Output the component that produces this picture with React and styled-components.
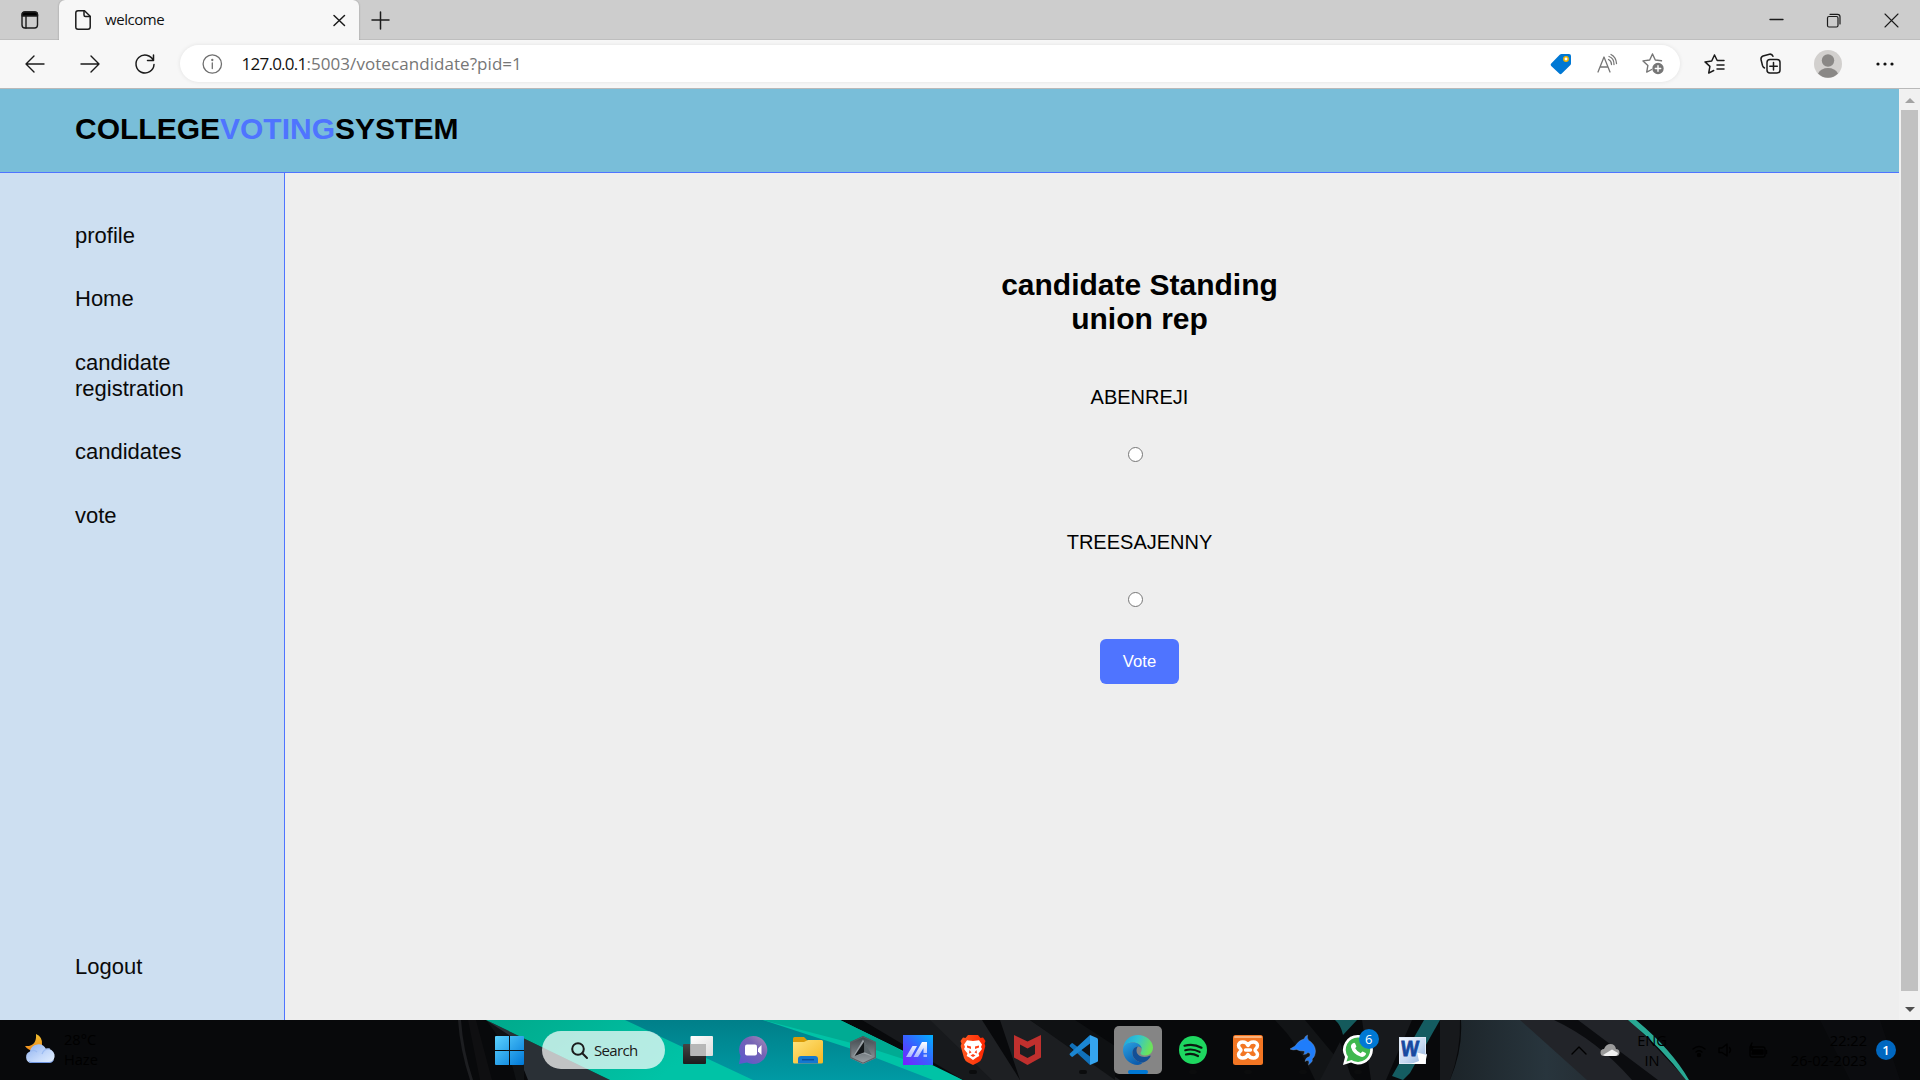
import React from "react";
import styled, { createGlobalStyle } from "styled-components";

const GlobalStyle = createGlobalStyle`
  * { box-sizing: border-box; }
  html, body { margin: 0; padding: 0; overflow: hidden; background: #eee; }
  svg { display: block; flex: none; overflow: visible; }
`;

const uiFont = `"Open Sans", "Noto Sans", sans-serif`;
const pageFont = `"Liberation Sans", Arial, sans-serif`;

const Screen = styled.div`
  width: 1920px;
  height: 1080px;
  display: flex;
  flex-direction: column;
  overflow: hidden;
  font-family: ${uiFont};
`;

/* ---------- browser chrome ---------- */

const TabStrip = styled.div`
  height: 40px;
  flex: none;
  display: flex;
  background: #cdcdcd;
  box-shadow: inset 0 -1px 0 #bebebe;
`;

const Slot = styled.div`
  width: ${(p) => p.$w}px;
  height: 100%;
  flex: none;
  display: flex;
  align-items: center;
  justify-content: center;
`;

const Tab = styled.div`
  width: 300px;
  height: 40px;
  display: flex;
  align-items: center;
  padding: 0 14px 0 16px;
  background: #f7f7f7;
  border-radius: 6px 6px 0 0;
  box-shadow: 0 0 2px rgba(0, 0, 0, 0.3);
`;

const TabTitle = styled.span`
  flex: 1;
  margin-left: 14px;
  padding-bottom: 2px;
  font-size: 15px;
  letter-spacing: -0.45px;
  line-height: 36px;
  color: #111;
`;

const Spacer = styled.div`
  flex: 1;
`;

const Toolbar = styled.div`
  height: 49px;
  flex: none;
  display: flex;
  align-items: center;
  padding: 0 8px 1px 7px;
  background: #f7f7f7;
  border-bottom: 1px solid #b9b9b9;
  position: relative;
`;

const AddressBar = styled.div`
  width: 1500px;
  height: 37px;
  margin: 0 7px 0 8px;
  display: flex;
  align-items: center;
  padding: 0 16px 0 22px;
  border-radius: 19px;
  background: #fff;
  box-shadow: 0 0 4px rgba(0, 0, 0, 0.09);
`;

const Url = styled.div`
  flex: 1;
  margin-left: 19.5px;
  font-size: 17px;
  letter-spacing: -0.75px;
  line-height: 36px;
  color: #111;
  white-space: nowrap;
`;

const UrlPath = styled.span`
  color: #767676;
  letter-spacing: 0.06px;
`;

const AddressActions = styled.div`
  display: flex;
  align-items: center;
  gap: 25px;
`;

/* ---------- web page ---------- */

const Viewport = styled.div`
  height: 931px;
  flex: none;
  display: flex;
  font-family: ${pageFont};
  color: #000;
`;

const Page = styled.div`
  width: 1899px;
  display: flex;
  flex-direction: column;
`;

const Header = styled.header`
  height: 84px;
  flex: none;
  display: flex;
  align-items: flex-start;
  padding: 23px 0 0 75px;
  background: #79bed9;
  border-bottom: 1px solid #4f74ff;
`;

const Brand = styled.h1`
  margin: 0;
  font-size: 30px;
  line-height: 34px;
  font-weight: 700;

  em {
    font-style: normal;
    color: #4f74ff;
  }
`;

const Body = styled.div`
  flex: 1;
  display: flex;
`;

const Sidebar = styled.nav`
  width: 285px;
  display: flex;
  flex-direction: column;
  justify-content: space-between;
  padding: 50px 75px 40px;
  background: #cddff1;
  border-right: 1px solid #4f74ff;
`;

const NavList = styled.div`
  display: flex;
  flex-direction: column;
  gap: 37.4px;
`;

const NavLink = styled.a`
  font-size: 22px;
  line-height: 26px;
  color: #0a0a0a;
`;

const Main = styled.main`
  flex: 1;
  display: flex;
  flex-direction: column;
  align-items: center;
  padding: 95px 0 0 95px;
  background: #eee;
`;

const Heading = styled.h2`
  width: 300px;
  margin: 0;
  text-align: center;
  font-size: 30px;
  line-height: 34px;
  font-weight: 700;
`;

const Candidate = styled.label`
  display: flex;
  flex: none;
  flex-direction: column;
  align-items: center;
  height: 145px;
  font-size: 20px;
  line-height: 24px;
`;

const Candidates = styled.div`
  display: flex;
  flex-direction: column;
  height: 253px;
  margin-top: 49px;
`;

const Radio = styled.input`
  appearance: none;
  width: 15px;
  height: 15px;
  margin: 38px 9px 0 0;
  border: 1px solid #767676;
  border-radius: 50%;
  background: #fff;
`;

const VoteButton = styled.button`
  width: 79px;
  height: 45px;
  margin-top: 1px;
  padding: 0;
  border: 0;
  border-radius: 6px;
  background: #4f74ff;
  color: #fff;
  font-family: ${pageFont};
  font-size: 16.67px;
`;

const ScrollBar = styled.div`
  width: 21px;
  display: flex;
  flex-direction: column;
  align-items: center;
  background: #f1f1f1;
`;

const ScrollArrow = styled.div`
  height: ${(p) => p.$h}px;
  padding-top: ${(p) => p.$pt}px;
  display: flex;
  align-items: center;
`;

const ScrollThumb = styled.div`
  width: 17px;
  height: 881px;
  flex: none;
  background: #c1c1c1;
`;

/* ---------- taskbar ---------- */

const Taskbar = styled.footer`
  height: 60px;
  flex: none;
  position: relative;
  background: #08090b;
`;

const Wallpaper = styled.svg`
  position: absolute;
  inset: 0;
`;

const TaskRow = styled.div`
  position: relative;
  height: 60px;
  display: flex;
  align-items: center;
`;

const Weather = styled.div`
  width: 482px;
  display: flex;
  align-items: center;
  gap: 9px;
  padding: 0 0 2px 25px;
`;

const Faint = styled.div`
  font-size: 14.6px;
  line-height: 20px;
  text-align: ${(p) => p.$align || "left"};
  color: #000;
  white-space: pre;
`;

const SearchPill = styled.div`
  width: 123px;
  height: 38px;
  margin: 0 9px 0 5px;
  display: flex;
  align-items: center;
  gap: 6px;
  padding-left: 29px;
  border-radius: 19px;
  background: rgba(255, 255, 255, 0.71);
  font-size: 15px;
  letter-spacing: -0.65px;
  color: #1a1a1a;
`;

const Tile = styled.div`
  width: 48px;
  height: 48px;
  margin-right: 6.98px;
  flex: none;
  position: relative;
  display: flex;
  align-items: center;
  justify-content: center;
  border-radius: 5px;
  background: ${(p) => (p.$active ? "#858585" : "transparent")};

  &::after {
    content: "";
    position: absolute;
    left: ${(p) => (p.$active ? 14 : 20)}px;
    bottom: 0;
    width: ${(p) => (p.$active ? 20 : 8)}px;
    height: 4px;
    border-radius: 2px;
    background: ${(p) => (p.$active ? "#0078d4" : p.$running ? "#0b0c0d" : "transparent")};
  }
`;

const Badge = styled.div`
  width: 20px;
  height: 20px;
  flex: none;
  border-radius: 50%;
  background: ${(p) => (p.$tray ? "#0067c0" : "#0078d4")};
  color: #fff;
  font-size: 13px;
  line-height: 20px;
  text-align: center;
  font-weight: ${(p) => (p.$tray ? 600 : 400)};
`;

const PinnedBadge = styled(Badge)`
  position: absolute;
  top: 3px;
  right: 3px;
`;

const Tray = styled.div`
  margin-left: auto;
  width: 349px;
  height: 60px;
  flex: none;
  display: flex;
  align-items: center;
`;

const TrayClock = styled.div`
  width: 93px;
  margin-right: 9px;
  padding-bottom: 1px;
`;

const Language = styled.div`
  width: 34px;
  margin: 0 21px 0 3px;
`;

/* ---------- icons ---------- */

const Stroke = ({ w = 20, h = 20, c = "#1b1b1b", sw = 1.4, children, className }) => (
  <svg className={className} width={w} height={h} viewBox={`0 0 ${w} ${h}`} fill="none" stroke={c} strokeWidth={sw} strokeLinecap="round" strokeLinejoin="round">
    {children}
  </svg>
);

const TabActionsIcon = () => (
  <Stroke w={18} h={18}>
    <rect x="1" y="1" width="15.5" height="16" rx="3" />
    <path d="M1.2 5V3.5Q1.2 1 4 1h9.500Q16.500 1 16.500 3.500V5z" fill="#000" />
    <path d="M5 5v12" />
  </Stroke>
);
const FileIcon = () => (
  <Stroke w={16} h={20} sw={1.5}>
    <path d="M3 .8h6.500l5.700 5.400V17q0 2.200-2.200 2.200H3Q.8 19.200.8 17V3Q.8.8 3 .8z" />
    <path d="M9 1v4q0 1.500 1.500 1.500h4.500" />
  </Stroke>
);
const BackIcon = () => <Stroke w={20} h={18}><path d="M19 9H1M9 1L1 9l8 8" /></Stroke>;
const ForwardIcon = () => <Stroke w={20} h={18}><path d="M1 9h18M11 1l8 8-8 8" /></Stroke>;
const ReloadIcon = () => (
  <Stroke w={20} h={20} sw={1.5}><path d="M18.300 6.500A9 9 0 1 0 19 10.500M18.500 1v5.500h-6" /></Stroke>
);
const InfoIcon = () => (
  <Stroke w={20} h={20} c="#6f6f6f" sw={1.3}>
    <circle cx="10.3" cy="10" r="9.200" /><path d="M10.300 9v5.500" /><circle cx="10.3" cy="6" r=".5" fill="#6f6f6f" />
  </Stroke>
);
const TagIcon = () => (
  <svg width="22" height="22" viewBox="0 0 22 22">
    <path d="M11.500 1h7.500q2 0 2 2v7.500q0 1-.8 1.800l-8.400 8.300q-1.300 1.200-2.600 0L1.200 13q-1.200-1.300 0-2.600l8.500-8.600q.8-.8 1.800-.8z" fill="#0078d4" />
    <circle cx="16" cy="6" r="2.200" fill="#fff" stroke="#f0b400" strokeWidth="1.500" />
  </svg>
);
const ReadAloudIcon = () => (
  <Stroke w={20} h={20} c="#767676" sw={1.3}>
    <path d="M1 18L7 3l6 15M3 13h8M11.500 5.500q3 1.500 3 5M12 2.500q5 1.500 5 8M14 .5q5 2.500 5.500 9" />
  </Stroke>
);
const starPath = "M10.500 1l2.800 6 6.200.8M10.500 1L7.700 7 1 7.900l4.900 4.500-1.200 6.700 5-2.600";
const AddFavoriteIcon = () => (
  <Stroke w={22} h={21} c="#767676" sw={1.4}>
    <path d={starPath} />
    <circle cx="16" cy="15.500" r="5" fill="#767676" stroke="#767676" />
    <path d="M16 12.800v5.400M13.300 15.500h5.400" stroke="#fff" />
  </Stroke>
);
const FavoritesIcon = () => (
  <Stroke w={21} h={20} sw={1.5}>
    <path d="M10.500 1L7.700 7 1 7.900l4.900 4.500-1.200 6.700 5-2.600M10.500 1l2.700 5.500H20M13 11h7M13 15h7" />
  </Stroke>
);
const CollectionsIcon = () => (
  <Stroke w={21} h={21} sw={1.5}>
    <rect x="7" y="6.500" width="13" height="13.500" rx="3" />
    <path d="M13.500 9.500v7.500M9.800 13.200h7.500M4.500 15q-1.500-.8-2-2.500L1 6.500Q.7 4 3 3L9.500 1.200Q12 .7 13 3.300" />
  </Stroke>
);
const AvatarIcon = () => (
  <svg width="28" height="28" viewBox="0 0 28 28">
    <circle cx="14" cy="14" r="14" fill="#d2d0ce" />
    <circle cx="14" cy="10.500" r="6.200" fill="#8a8886" />
    <path d="M4 23.500Q7 18 14 18t10 5.500A14 14 0 0 1 4 23.500z" fill="#8a8886" />
  </svg>
);
const DotsIcon = () => (
  <svg width="18" height="4" viewBox="0 0 18 4" fill="#111"><circle cx="2" cy="2" r="1.600" /><circle cx="9" cy="2" r="1.600" /><circle cx="16" cy="2" r="1.600" /></svg>
);

const WeatherIcon = () => (
  <svg width="30" height="30" viewBox="0 0 30 30">
    <defs>
      <linearGradient id="moon" x2="0" y2="1"><stop stopColor="#f0c030" /><stop offset="1" stopColor="#f28a1c" /></linearGradient>
      <linearGradient id="cloud" x2="1" y2="1"><stop stopColor="#8db0ef" /><stop offset=".6" stopColor="#c6dafb" /><stop offset="1" stopColor="#e3effd" /></linearGradient>
    </defs>
    <path d="M11 0q7 3 6 11l-6 6Q3 17 0 12q12 1 11-12z" fill="url(#moon)" />
    <path d="M6 29a6 6 0 0 1-1-11.500A8.500 8.500 0 0 1 21 15a7 7 0 0 1 3 14z" fill="url(#cloud)" />
    <path d="M4 27.500q1 1 3 1h17q3 0 4.500-2" stroke="#6f96e2" strokeWidth="1" fill="none" />
    <path d="M12 18q-3-3-7-.5M17 20q2-6 8-5" stroke="#9dbcf2" strokeWidth="1.200" fill="none" />
  </svg>
);

const WindowsIcon = () => (
  <svg width="29" height="29" viewBox="0 0 29 29">
    <defs><linearGradient id="win" gradientUnits="userSpaceOnUse" x1="0" y1="0" x2="29" y2="29"><stop stopColor="#5bd2ff" /><stop offset="1" stopColor="#0078d7" /></linearGradient></defs>
    <path d="M1 0h13v14H0V1q0-1 1-1zM15 0h13q1 0 1 1v13H15zM0 15h14v14H1q-1 0-1-1zM15 15h14v13q0 1-1 1H15z" fill="url(#win)" />
  </svg>
);
const SearchIcon = () => (
  <Stroke w={17} h={17} sw={2}><circle cx="7" cy="7" r="5.800" /><path d="M11.300 11.300L16 16" /></Stroke>
);
const TaskViewIcon = () => (
  <svg width="30" height="28" viewBox="0 0 30 28">
    <defs>
      <linearGradient id="tv" x2="0" y2="1"><stop stopColor="#454545" /><stop offset="1" stopColor="#1d1d1d" /></linearGradient>
      <linearGradient id="tw" x2="1" y2="1"><stop stopColor="#fff" /><stop offset="1" stopColor="#dcdcdc" /></linearGradient>
    </defs>
    <rect y="8" width="23" height="20" rx="1" fill="url(#tv)" />
    <rect x="7.500" width="22.500" height="20" rx="1" fill="url(#tw)" />
    <rect x="7.500" y="8" width="15.500" height="12" fill="#b7b7b7" />
  </svg>
);
const ChatIcon = () => (
  <svg width="28" height="28" viewBox="0 0 28 28">
    <defs><linearGradient id="chat" x1="1" x2="0" y2="1"><stop stopColor="#a98fb8" /><stop offset=".4" stopColor="#7663b5" /><stop offset="1" stopColor="#5b57cf" /></linearGradient></defs>
    <path d="M14 0a14 14 0 1 1-6 26.500L0 28l1.500-8A14 14 0 0 1 14 0z" fill="url(#chat)" />
    <rect x="6" y="8.500" width="12" height="11" rx="2" fill="#fff" />
    <path d="M19 12.500L22.500 9v10L19 15.500z" fill="#fff" />
  </svg>
);
const FolderIcon = () => (
  <svg width="30" height="27" viewBox="0 0 30 27">
    <defs><linearGradient id="fold" x2="1" y2="1"><stop stopColor="#ffe37c" /><stop offset="1" stopColor="#f5b722" /></linearGradient></defs>
    <path d="M1.500 0H11l4 4v6H0V1.500Q0 0 1.500 0z" fill="#d99a08" />
    <path d="M0 5h11l4-2h13.500Q30 3 30 4.500V25q0 1.500-1.500 1.500h-27Q0 26.500 0 25z" fill="url(#fold)" />
    <path d="M5 26.500V22q0-3 3-3h14q3 0 3 3v4.500z" fill="#1478d0" />
    <path d="M9 22.700h12" stroke="#0a4f9e" strokeWidth="1.500" />
  </svg>
);
const CrateIcon = () => (
  <svg width="26" height="28" viewBox="0 0 26 28">
    <defs><linearGradient id="crate" x2="0" y2="1"><stop stopColor="#3f464b" /><stop offset="1" stopColor="#9aa1a6" /></linearGradient></defs>
    <path d="M13 0l13 6v16l-13 6L0 22V6z" fill="url(#crate)" />
    <path d="M13 3.500L3 20.500 13.500 17.500l9 3z" fill="#9ba2a7" />
    <path d="M14.500 5v11.300L4.500 20z" fill="#14181b" />
    <path d="M14.500 5l7.500 14.500-7.500-3.200z" fill="#5d666b" />
    <path d="M13 .8l12.300 5.600v15.200L13 27.200.7 21.600V6.400z" stroke="#5a6166" strokeWidth="1.200" fill="none" />
  </svg>
);
const MyAsusIcon = () => (
  <svg width="30" height="30" viewBox="0 0 30 30">
    <defs>
      <linearGradient id="asus" x1="0" y1="1" x2="1" y2="0"><stop stopColor="#7a1cff" /><stop offset=".5" stopColor="#3860ff" /><stop offset="1" stopColor="#00b2ff" /></linearGradient>
      <linearGradient id="asw" x2="0" y2="1"><stop stopColor="#fff" /><stop offset="1" stopColor="#a9b8ff" /></linearGradient>
    </defs>
    <rect width="30" height="30" fill="url(#asus)" />
    <path d="M3 22L9.500 11h4.500L8 22zM10.500 22L19 7h5v11h-3.500v-5L15 22zM20.500 19.500H24V22h-3.500z" fill="url(#asw)" />
  </svg>
);
const BraveIcon = () => (
  <svg width="26" height="30" viewBox="0 0 26 30">
    <defs><linearGradient id="brave" x2="1"><stop stopColor="#ff5a22" /><stop offset="1" stopColor="#ff2500" /></linearGradient></defs>
    <path d="M8 0h10l2.500 3L23 2.500 25.500 6l-1 2.500.8 2.500L22 23q-1 3-4 4.500L13 30l-5-2.500Q5 26 4 23L.7 11l.8-2.500L.5 6 3 2.500 5.500 3z" fill="url(#brave)" />
    <path d="M13 6l6-.8 3 4.300-1 2.500 1 2-3.500 4.500.8 2.500-2.800 1.500L13 25l-3.500-2.500L6.700 21l.8-2.500L4 14l1-2-1-2.500 3-4.300z" fill="#fff" />
    <path d="M7 10.500l4 1v2.500l-4-1.500zM19 10.500l-4 1v2.500l4-1.500zM13 10.500v6M9.500 15l2 2.500-2.500 1zM16.500 15l-2 2.500 2.500 1zM10.500 20.500L13 19l2.500 1.500L13 22z" fill="#ff421a" />
  </svg>
);
const McAfeeIcon = () => (
  <svg width="27" height="30" viewBox="0 0 27 30">
    <path d="M0 0l13.500 6.500L27 0v22.500L13.500 30 0 22.500zM6 9.500V19l7.500 4 7.500-4V9.500l-7.500 4z" fill="#c0302e" fillRule="evenodd" />
  </svg>
);
const CodeIcon = () => (
  <svg width="30" height="30" viewBox="0 0 30 30">
    <path d="M22 30v-8.500L5 8.400q-.8-.6-1.600 0L1.900 9.900q-.8.8 0 1.600z" fill="#1170b8" />
    <path d="M22 0v8.500L5 21.600q-.8.6-1.600 0L1.900 20q-.8-.8 0-1.600z" fill="#1b86d2" />
    <path d="M22 0l7 3q1 .5 1 1.500v21q0 1-1 1.500l-7 3z" fill="#35a5f0" />
  </svg>
);
const EdgeIcon = () => (
  <svg width="30" height="30" viewBox="0 0 30 30">
    <defs>
      <linearGradient id="ed1" x2="1" y2=".3"><stop stopColor="#1ba2df" /><stop offset=".5" stopColor="#31c3d2" /><stop offset="1" stopColor="#6be25c" /></linearGradient>
      <linearGradient id="ed2" x2=".6" y2="1"><stop stopColor="#2aa2e2" /><stop offset="1" stopColor="#0b5cae" /></linearGradient>
    </defs>
    <path d="M0 14C1 5 7 0 15 0s15 6 15 12.500c0 5-3.500 8-8 8-3 0-4.500-1.200-4.500-2.300 0-1 1.200-1.400 1.200-4C18.700 10 14 7.500 10 7.500 5 7.500 1 10 0 14z" fill="url(#ed1)" />
    <path d="M0 14C1 9.500 5 7.500 10 7.500c4.500 0 8.500 2.600 8.700 6.500-.6-1.500-2-2.400-3.700-2.400-3 0-5.500 3-5.500 6.500 0 6 5 9.500 10.500 9.500Q18 30 15 30A15 15 0 0 1 0 14z" fill="url(#ed2)" />
    <path d="M15 11.600c-3.500.4-5.500 3-5.500 6.500 0 6.500 6 9.500 10.800 9.500 3-1.200 5.700-3.400 7.200-6.200.3-.7-.2-1-.8-.7-6 3-13.200.5-13.200-5.200 0-1.700.5-3 1.500-3.900z" fill="#134f96" />
  </svg>
);
const SpotifyIcon = () => (
  <svg width="28" height="28" viewBox="0 0 28 28">
    <circle cx="14" cy="14" r="14" fill="#1ed760" />
    <path d="M5.500 9.700q9-2.500 17 2M6.300 14.200q7.500-2 14.300 1.700M7 18.500q6.200-1.600 12 1.500" fill="none" stroke="#0b1a10" strokeWidth="2.200" strokeLinecap="round" />
  </svg>
);
const XamppIcon = () => (
  <svg width="30" height="30" viewBox="0 0 30 30">
    <rect width="30" height="30" rx="2.500" fill="#f37623" />
    <rect x="1" y="1" width="28" height="2" rx="1" fill="#f9b27d" />
    <path d="M15 10.500C13 5.500 5.500 6 5.500 10.500c0 2.500 2.500 3 2.500 4.500s-2.500 2-2.500 4.500c0 4.500 7.500 5 9.500 0 2 5 9.500 4.500 9.500 0 0-2.500-2.500-3-2.500-4.500s2.500-2 2.500-4.500c0-4.500-7.500-5-9.500 0z" fill="none" stroke="#fff" strokeWidth="3.400" strokeLinejoin="round" />
    <path d="M12.500 15h5" stroke="#fff" strokeWidth="3.400" strokeLinecap="round" />
  </svg>
);
const DolphinIcon = () => (
  <svg width="26" height="30" viewBox="0 0 26 30">
    <path d="M0 14l5-3q4-6 9-7 1-3 3.500-4-.5 3 .8 5Q25 9 25.500 16q0 5-3.300 8 .5 2-.5 3L18.500 30q1-3 0-4.500-2-.5-3.500 1 .5-4 4.500-5 1-1.500.5-3l-2-1q-1.500 2-4.500 2 1-1 1-3.500-5 .2-8-1.500-3.500 1-6.500-.5z" fill="#1f7dfb" stroke="#8c94a0" strokeWidth=".4" />
  </svg>
);
const WhatsAppIcon = () => (
  <svg width="30" height="30" viewBox="0 0 30 30">
    <path d="M15 0a14.700 14.700 0 1 1-7 27.500L0 30l2-8A14.700 14.700 0 0 1 15 0z" fill="#fff" />
    <path d="M15 2.500a12.200 12.200 0 1 1-6.500 22.500L3.500 26.500 5 21.700A12.200 12.200 0 0 1 15 2.500z" fill="#3fb84f" />
    <path d="M10.500 8q1-.5 1.500.3l1.400 3q0 .7-1.200 2 2 3.700 5.500 5 1.500-2 2-1.800l3 1.600q.6.5 0 1.700-1.500 2.700-4.700 2-8-2.300-10-9.500Q7.500 9.500 10.500 8z" fill="#fff" />
  </svg>
);

const WordMark = styled.div`
  width: 27px;
  height: 27px;
  position: relative;
  background: linear-gradient(135deg, #f2f7ff 0%, #c8daf2 55%, #8fb2df 100%);
  border: 1px solid #dfe9f7;
  font-family: ${pageFont};
  font-size: 19px;
  line-height: 22px;
  font-weight: 700;
  color: #1749a0;

  span {
    display: block;
    transform: translateX(1px) scaleY(1.15) skewX(-4deg);
    -webkit-text-stroke: 0.7px #1749a0;
  }
`;
const Sheet = styled.svg`
  position: absolute;
  left: 11px;
  top: 14px;
`;
const WordIcon = () => (
  <WordMark>
    <span>W</span>
    <Sheet width="16" height="12" viewBox="0 0 16 12"><path d="M6 0l10 2.500L14 12H0l8-3z" fill="#fff" /><path d="M6 0l10 2.500" stroke="#b6c9e6" /></Sheet>
  </WordMark>
);

const pinned = [
  { Icon: TaskViewIcon },
  { Icon: ChatIcon },
  { Icon: FolderIcon },
  { Icon: CrateIcon },
  { Icon: MyAsusIcon },
  { Icon: BraveIcon, running: true },
  { Icon: McAfeeIcon },
  { Icon: CodeIcon, running: true },
  { Icon: EdgeIcon, active: true },
  { Icon: SpotifyIcon, running: true },
  { Icon: XamppIcon, running: true },
  { Icon: DolphinIcon, running: true },
  { Icon: WhatsAppIcon, running: true, badge: "6" },
  { Icon: WordIcon },
];

const links = ["profile", "Home", "candidate registration", "candidates", "vote"];

const TaskbarWallpaper = () => (
  <Wallpaper width="1920" height="60" viewBox="0 0 1920 60">
    <defs>
      <linearGradient id="mint" x2="1" y2=".15"><stop stopColor="#00a98b" /><stop offset=".5" stopColor="#00c3a6" /><stop offset="1" stopColor="#00c3a6" /></linearGradient>
      <linearGradient id="sea" x2="0" y2="1"><stop stopColor="#007f89" /><stop offset="1" stopColor="#009aa4" /></linearGradient>
      <linearGradient id="slate" x2="1"><stop stopColor="#1c2429" /><stop offset=".5" stopColor="#28353d" /><stop offset="1" stopColor="#22262b" /></linearGradient>
    </defs>
    <path d="M458 0h3q2 30 12 60h-3Q460 30 458 0z" fill="#1d1e21" />
    <path d="M468 0h8l16 60h-12z" fill="#0f0f11" />
    <path d="M486 0l124 60h-82q-10-30-42-60z" fill="#2a3036" />
    <path d="M486 0l38 25v35h-8q-6-30-30-60z" fill="#101214" />
    <path d="M486 0h354l123 60H610z" fill="url(#mint)" />
    <path d="M625 0h138l95 31 75 29H753z" fill="url(#sea)" />
    <path d="M763 0h77l55 27 30 19-62-20z" fill="#00ab93" />
    <path d="M862 0h118l30 60h-47z" fill="#17191c" />
    <path d="M930 0h52l38 60h-28z" fill="#1e2023" />
    <path d="M1000 0h30l90 60h-100z" fill="#1c1e21" />
    <path d="M1030 0h45l40 26v34z" fill="#0f1113" />
    <path d="M1275 0h30l50 60h-40q-15-35-40-60z" fill="#121416" />
    <path d="M1320 60l20-38 12 38zM1362 0h50l-26 60h-15z" fill="#17191c" />
    <path d="M1335 0h22l-14 15q-2-10-8-15z" fill="#145a5c" />
    <path d="M1424 0h16l-30 53-7 7-11-4z" fill="#145c61" />
    <path d="M1440 0h20q1 30-10 60h-10z" fill="#17191c" />
    <path d="M1461 0h94l87 60h-192q13-30 11-60z" fill="url(#slate)" />
    <path d="M1520 0h110l57 60h-100z" fill="#222429" />
    <path d="M1554 0h24l80 60h-26q-35-40-78-60z" fill="#0b0c0f" />
    <path d="M1628 0h8q36 30 53 60h-3Q1662 28 1628 0z" fill="#29a994" />
    <path d="M1820 0h60l20 60h-50z" fill="#0b0c0f" />
  </Wallpaper>
);

export default function App() {
  return (
    <Screen>
      <GlobalStyle />
      <TabStrip>
        <Slot $w={59}><TabActionsIcon /></Slot>
        <Tab>
          <FileIcon />
          <TabTitle>welcome</TabTitle>
          <Stroke w={11} h={10} sw={1.5}><path d="M0 .5l10.500 10M10.500 .5l-10.500 10" /></Stroke>
        </Tab>
        <Slot $w={43}><Stroke w={17} h={17} sw={1.5}><path d="M8.500 0v17M0 8h17" /></Stroke></Slot>
        <Spacer />
        <Slot $w={57}><Stroke w={13} h={2} sw={1.3}><path d="M0 .5h13" /></Stroke></Slot>
        <Slot $w={57}>
          <Stroke w={13} h={13} sw={1.2}><rect x=".5" y="2.500" width="10.500" height="10.500" rx="1.500" /><path d="M3 .3h7.500q2.500 0 2.500 2.500V10" /></Stroke>
        </Slot>
        <Slot $w={58}><Stroke w={13} h={13} sw={1.1}><path d="M0 0l13 13M13 0L0 13" /></Stroke></Slot>
      </TabStrip>

      <Toolbar>
        <Slot $w={55}><BackIcon /></Slot>
        <Slot $w={55}><ForwardIcon /></Slot>
        <Slot $w={55}><ReloadIcon /></Slot>
        <AddressBar>
          <InfoIcon />
          <Url>127.0.0.1<UrlPath>:5003/votecandidate?pid=1</UrlPath></Url>
          <AddressActions><TagIcon /><ReadAloudIcon /><AddFavoriteIcon /></AddressActions>
        </AddressBar>
        <Slot $w={55.5}><FavoritesIcon /></Slot>
        <Slot $w={55.5}><CollectionsIcon /></Slot>
        <Slot $w={60}><AvatarIcon /></Slot>
        <Slot $w={54}><DotsIcon /></Slot>
      </Toolbar>

      <Viewport>
        <Page>
          <Header><Brand>COLLEGE<em>VOTING</em>SYSTEM</Brand></Header>
          <Body>
            <Sidebar>
              <NavList>{links.map((l) => <NavLink key={l}>{l}</NavLink>)}</NavList>
              <NavLink>Logout</NavLink>
            </Sidebar>
            <Main>
              <Heading>candidate Standing union rep</Heading>
              <Candidates>
                <Candidate>ABENREJI<Radio type="radio" name="candidate" /></Candidate>
                <Candidate>TREESAJENNY<Radio type="radio" name="candidate" /></Candidate>
              </Candidates>
              <VoteButton>Vote</VoteButton>
            </Main>
          </Body>
        </Page>
        <ScrollBar>
          <ScrollArrow $h={21} $pt={2}><svg width="10" height="5" viewBox="0 0 10 5"><path d="M0 5l5-5 5 5z" fill="#a3a3a3" /></svg></ScrollArrow>
          <ScrollThumb />
          <ScrollArrow $h={29} $pt={8}><svg width="10" height="5" viewBox="0 0 10 5"><path d="M0 0l5 5 5-5z" fill="#505050" /></svg></ScrollArrow>
        </ScrollBar>
      </Viewport>

      <Taskbar>
        <TaskbarWallpaper />
        <TaskRow>
          <Weather><WeatherIcon /><Faint>{"28°C\nHaze"}</Faint></Weather>
          <Slot $w={55}><WindowsIcon /></Slot>
          <SearchPill><SearchIcon />Search</SearchPill>
          {pinned.map(({ Icon, active, running, badge }, i) => (
            <Tile key={i} $active={active} $running={running}>
              <Icon />
              {badge && <PinnedBadge>{badge}</PinnedBadge>}
            </Tile>
          ))}
          <Tray>
            <Stroke w={16} h={9} c="#000"><path d="M1 8l7-7 7 7" /></Stroke>
            <Slot $w={45}>
              <svg width="18" height="12" viewBox="0 0 18 12"><path d="M3 12a3.500 3.500 0 0 1 0-7Q5 0 9.500 0T15 5a3.500 3.500 0 0 1 0 7z" fill="#9b9b9b" /><path d="M2 11L11 5.500l6 3.500q-.5 3-3 3H4z" fill="#f0f0f0" /></svg>
            </Slot>
            <Language><Faint $align="center">{"ENG\nIN"}</Faint></Language>
            <Stroke w={18} h={14} c="#000"><path d="M3 6q6-5 12 0M6 9q3-2.500 6 0" /><circle cx="9" cy="12" r="1.500" fill="#000" /></Stroke>
            <Slot $w={36}><Stroke w={16} h={14} c="#000"><path d="M1 5h3l5-4v12L4 9.500H1zM11.500 4.500q2 2.500 0 5" /></Stroke></Slot>
            <Slot $w={30}><Stroke w={20} h={15} c="#000"><rect x="1" y="4" width="15" height="10" rx="2" /><path d="M4 7h10v4H3zM17.500 7.500v3M3 0L1 4h3L2.500 7" fill="#000" /></Stroke></Slot>
            <TrayClock><Faint $align="right">{"22:22\n26-02-2023"}</Faint></TrayClock>
            <Badge $tray>1</Badge>
          </Tray>
        </TaskRow>
      </Taskbar>
    </Screen>
  );
}
